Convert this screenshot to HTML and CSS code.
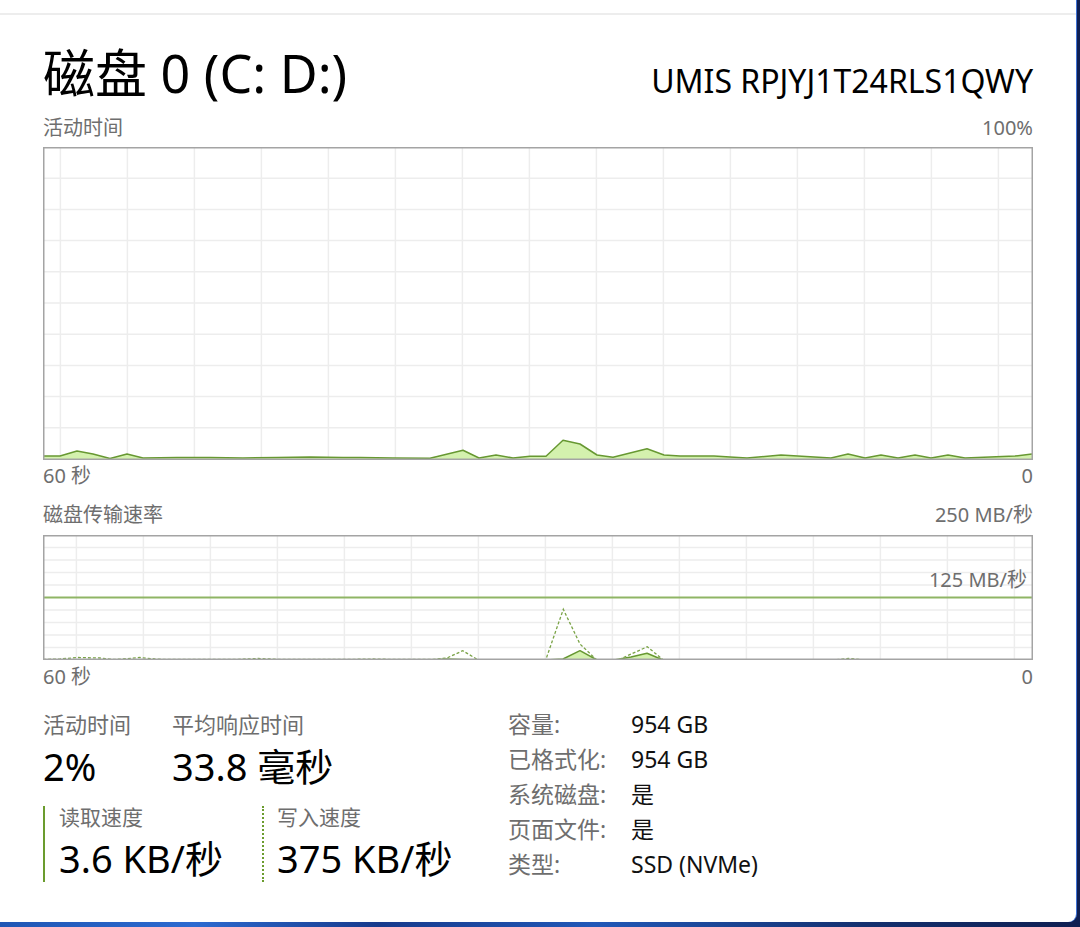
FILE: index.html
```html
<!DOCTYPE html>
<html lang="zh-CN">
  <head>
    <meta charset="UTF-8" />
    <meta name="viewport" content="width=device-width, initial-scale=1.0" />
    <title>磁盘 0</title>
    <link rel="stylesheet" href="styles.css">
  </head>

  <body>
    <div class="window">
      <div class="topbar"></div>
      <div class="content">
        <div class="header">
          <h1 class="title">磁盘 0 (C: D:)</h1>
          <div class="model">UMIS RPJYJ1T24RLS1QWY</div>
        </div>

        <!-- active time graph -->
        <div class="axis-row label-row">
          <span>活动时间</span>
          <span>100%</span>
        </div>
        <div class="chart chart-active">
          <svg width="990" height="313" viewBox="0 0 990 313">
            <path class="grid" d="M17.4 0V313M84.4 0V313M151.4 0V313M218.4 0V313M285.4 0V313M352.4 0V313M419.4 0V313M486.4 0V313M553.4 0V313M620.4 0V313M687.4 0V313M754.4 0V313M821.4 0V313M888.4 0V313M955.4 0V313M0 31.2H990M0 62.4H990M0 93.6H990M0 124.8H990M0 156H990M0 187.2H990M0 218.4H990M0 249.6H990M0 280.8H990" />
            <polygon class="area" points="0,309 17,309 34,304 50,307 67,311.5 84,307 100,311 117,310.8 134,310.6 167,310.5 200,311 234,310.5 267,310 300,310.5 317,310.5 350,311 387,311.3 420,303.3 436,311 453,308 470,311 487,309.3 503,309.3 520,293.3 537,297 554,308 570,310.3 604,301.7 621,308 637,309 671,309 687,310 704,311 738,308 788,311 805,307 822,311 838,308 855,311 872,308 888,311 905,308 922,311 972,309 989,307 989,312 0,312" />
            <polyline class="line" points="0,309 17,309 34,304 50,307 67,311.5 84,307 100,311 117,310.8 134,310.6 167,310.5 200,311 234,310.5 267,310 300,310.5 317,310.5 350,311 387,311.3 420,303.3 436,311 453,308 470,311 487,309.3 503,309.3 520,293.3 537,297 554,308 570,310.3 604,301.7 621,308 637,309 671,309 687,310 704,311 738,308 788,311 805,307 822,311 838,308 855,311 872,308 888,311 905,308 922,311 972,309 989,307" />
            <rect class="frame" x="0.75" y="0.75" width="988.5" height="311.5" />
          </svg>
        </div>
        <div class="axis-row bottom-row">
          <span>60 秒</span>
          <span>0</span>
        </div>

        <!-- transfer rate graph -->
        <div class="axis-row label-row2">
          <span>磁盘传输速率</span>
          <span>250 MB/秒</span>
        </div>
        <div class="chart chart-transfer">
          <svg width="990" height="125" viewBox="0 0 990 125">
            <path class="grid" d="M33.4 0V125M100.4 0V125M167.4 0V125M234.4 0V125M301.4 0V125M368.4 0V125M435.4 0V125M502.4 0V125M569.4 0V125M636.4 0V125M703.4 0V125M770.4 0V125M837.4 0V125M904.4 0V125M971.4 0V125M0 12.5H990M0 25H990M0 37.5H990M0 50H990M0 75H990M0 87.5H990M0 100H990M0 112.5H990" />
            <line class="mark-line" x1="0" y1="62.5" x2="990" y2="62.5" />
            <polygon class="area" points="388,125 404,124 420,124.5 435,125" />
            <polygon class="area" points="503,125 520,124 537,115.7 554,125" />
            <polygon class="area" points="571,125 588,122 604,118.3 620,125" />
            <polyline class="line" points="388,125 404,124 420,124.5 435,125 503,125 520,124 537,115.7 554,125 571,125 588,122 604,118.3 620,125" />
            <polyline class="write" points="0,124.5 17,124 34,122.5 57,123 70,124.5 80,124 97,122.5 112,124 125,124.5 190,124.5 215,123.5 240,124.5 300,124.5 330,124 355,124.5 388,124.5 404,123 419.7,115.7 435.3,125 502.7,125 520.3,74.3 537,109 553.7,125 575,125 604.3,111.7 620.3,125 790,125 806,123.5 822,125" />
            <rect class="frame" x="0.75" y="0.75" width="988.5" height="123.5" />
          </svg>
          <span class="mark">125 MB/秒</span>
        </div>
        <div class="axis-row">
          <span>60 秒</span>
          <span>0</span>
        </div>

        <!-- numbers -->
        <div class="stats">
          <div class="stats-left">
            <div class="stat-top">
              <div class="stat stat-active">
                <div class="stat-label">活动时间</div>
                <div class="stat-value">2%</div>
              </div>
              <div class="stat">
                <div class="stat-label">平均响应时间</div>
                <div class="stat-value">33.8 毫秒</div>
              </div>
            </div>
            <div class="stat-bottom">
              <div class="speed read">
                <div class="speed-label">读取速度</div>
                <div class="speed-value">3.6 KB/秒</div>
              </div>
              <div class="speed write-speed">
                <div class="speed-label">写入速度</div>
                <div class="speed-value">375 KB/秒</div>
              </div>
            </div>
          </div>
          <div class="props">
            <div class="prop"><span class="prop-name">容量:</span><span>954 GB</span></div>
            <div class="prop"><span class="prop-name">已格式化:</span><span>954 GB</span></div>
            <div class="prop"><span class="prop-name">系统磁盘:</span><span>是</span></div>
            <div class="prop"><span class="prop-name">页面文件:</span><span>是</span></div>
            <div class="prop"><span class="prop-name">类型:</span><span>SSD (NVMe)</span></div>
          </div>
        </div>
      </div>
    </div>
  </body>
</html>
```

FILE: styles.css
```css
body {
  margin: 0;
  height: 927px;
  overflow: hidden;
  font-family: "Noto Sans", "Noto Sans CJK SC", sans-serif;
  background: linear-gradient(90deg, #1f56b4 0%, #2c6ad0 18%, #173a8c 35%, #2158b8 55%, #14306f 80%, #0f1f52 100%);
}

.window {
  width: 1076px;
  height: 922px;
  background-color: #fff;
  border-bottom-right-radius: 8px;
  box-shadow: 1px 0 0 #3f72d4;
  color: #111;
}

.topbar {
  height: 13px;
  border-bottom: 2px solid #ededed;
}

.content {
  padding: 0 43px;
}

.header {
  display: flex;
  justify-content: space-between;
  align-items: baseline;
  margin-top: 28px;
}

.title {
  margin: 0;
  font-size: 52px;
  font-weight: normal;
  line-height: 60px;
  color: #000;
}

.model {
  font-size: 32px;
  line-height: 40px;
  color: #000;
}

/* small grey labels around graphs */
.axis-row {
  display: flex;
  justify-content: space-between;
  height: 24px;
  font-size: 20px;
  line-height: 24px;
  color: #6e6e6e;
  margin-top: 5px;
}

.label-row {
  margin-top: 13px;
}

.bottom-row {
  margin-top: 4px;
}

.label-row2 {
  margin-top: 15px;
}

.chart {
  position: relative;
}

.chart svg {
  display: block;
}

.chart-active {
  margin-top: 7px;
  height: 313px;
}

.chart-transfer {
  margin-top: 8px;
  height: 125px;
}

.grid {
  stroke: #ededed;
  stroke-width: 1.5;
  fill: none;
}

.frame {
  fill: none;
  stroke: #a4a4a4;
  stroke-width: 1.5;
}

.area {
  fill: #d4f1ae;
  stroke: none;
}

.line {
  fill: none;
  stroke: #679832;
  stroke-width: 1.5;
  stroke-linejoin: round;
}

.write {
  fill: none;
  stroke: #7aa347;
  stroke-width: 1.3;
  stroke-dasharray: 3 2;
}

.mark-line {
  stroke: #8fb565;
  stroke-width: 1.8;
}

.mark {
  position: absolute;
  right: 6px;
  top: 33px;
  font-size: 20px;
  line-height: 24px;
  color: #6e6e6e;
}

/* bottom numbers */
.stats {
  display: flex;
  margin-top: 18px;
}

.stats-left {
  width: 465px;
  padding-top: 3px;
}

.stat-top,
.stat-bottom {
  display: flex;
}

.stat-active {
  width: 129px;
}

.stat-label {
  font-size: 22px;
  line-height: 28px;
  color: #6e6e6e;
}

.stat-value {
  margin-top: 5px;
  font-size: 38px;
  line-height: 46px;
  color: #000;
}

.stat-bottom {
  margin-top: 17px;
}

.speed {
  padding-bottom: 4px;
}

.read {
  width: 203px;
  border-left: 2px solid #6b9c2e;
  padding-left: 14px;
}

.write-speed {
  border-left: 2px dotted #6b9c2e;
  padding-left: 13px;
}

.speed-label {
  font-size: 21px;
  line-height: 22px;
  color: #6e6e6e;
}

.speed-value {
  margin-top: 10px;
  font-size: 38px;
  line-height: 40px;
  color: #000;
}

.props {
  font-size: 23px;
  line-height: 35px;
  color: #111;
}

.prop {
  display: flex;
  height: 35px;
}

.prop-name {
  width: 123px;
  color: #6e6e6e;
}
```
